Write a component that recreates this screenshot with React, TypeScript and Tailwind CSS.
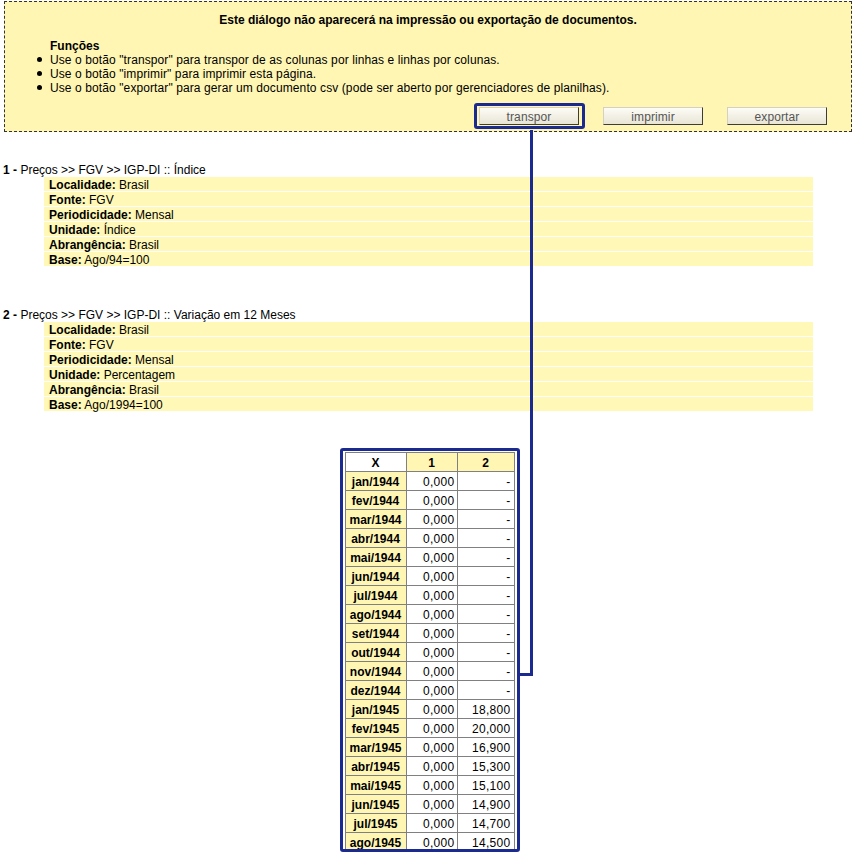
import React from "react";

const meses = ["jan", "fev", "mar", "abr", "mai", "jun", "jul", "ago", "set", "out", "nov", "dez"];
const valores1945 = ["18,800", "20,000", "16,900", "15,300", "15,100", "14,900", "14,700", "14,500"];

interface Linha {
  data: string;
  v1: string;
  v2: string;
}

function getLinhas(): Linha[] {
  const linhas: Linha[] = [];
  // 1944 sem dados na série 2
  meses.forEach((m) => linhas.push({ data: `${m}/1944`, v1: "0,000", v2: "-" }));
  valores1945.forEach((v, i) => linhas.push({ data: `${meses[i]}/1945`, v1: "0,000", v2: v }));
  return linhas;
}

interface SerieProps {
  n: number;
  titulo: string;
  unidade: string;
  base: string;
}

function Serie({ n, titulo, unidade, base }: SerieProps) {
  const campos: [string, string][] = [
    ["Localidade", "Brasil"],
    ["Fonte", "FGV"],
    ["Periodicidade", "Mensal"],
    ["Unidade", unidade],
    ["Abrangência", "Brasil"],
    ["Base", base],
  ];
  return (
    <div>
      <p className="h-[14px] leading-[16px] pl-[3px]">
        <b>{n} -</b> {titulo}
      </p>
      <div className="mt-[1px] ml-[44px] w-[769px] flex flex-col gap-[1px]">
        {campos.map(([k, v]) => (
          <div key={k} className="h-[14px] leading-[16px] bg-[#fff8b6] pl-[5px]">
            <b>{k}:</b> {v}
          </div>
        ))}
      </div>
    </div>
  );
}

function Botao({ children }: { children: React.ReactNode }) {
  return (
    <button className="h-[18px] w-[100px] border border-t-[#d4d0c4] border-l-[#d4d0c4] border-r-[#3c3c3c] border-b-[#3c3c3c] bg-gradient-to-b from-[#fdfcf6] to-[#e8e4d6] text-[#555] leading-[18px] tracking-[0.1px]">
      {children}
    </button>
  );
}

export default function App() {
  const linhas = getLinhas();
  const cell = "h-[19px] pt-[1px] border-r border-b border-[#808080] flex items-center";

  return (
    <div className="relative min-h-screen bg-white text-black font-['Liberation_Sans',Arial,sans-serif] text-[12px] leading-[14px]">
      {/* Diálogo */}
      <div className="mt-[1px] ml-[4px] mr-[2px] border border-dashed border-[#333] bg-[#fff6b4] pt-[11px] pb-[6px]">
        <p className="text-center font-bold">
          Este diálogo não aparecerá na impressão ou exportação de documentos.
        </p>
        <p className="mt-[12px] pl-[45px] font-bold">Funções</p>
        <ul className="tracking-[0.1px]">
          {[
            'Use o botão "transpor" para transpor de as colunas por linhas e linhas por colunas.',
            'Use o botão "imprimir" para imprimir esta página.',
            'Use o botão "exportar" para gerar um documento csv (pode ser aberto por gerenciadores de planilhas).',
          ].map((t) => (
            <li key={t} className="flex items-center h-[14px]">
              <span className="ml-[32px] mr-[8px] mb-[2px] w-[5px] h-[5px] rounded-full bg-black" />
              {t}
            </li>
          ))}
        </ul>
        <div className="mt-[12px] flex justify-end gap-[24px] pr-[24px]">
          <div className="relative">
            <Botao>transpor</Botao>
            <div className="absolute -left-[5px] -right-[6px] -top-[4px] -bottom-[4px] border-[3px] border-[#1b2a8e] rounded-[3px]" />
          </div>
          <Botao>imprimir</Botao>
          <Botao>exportar</Botao>
        </div>
      </div>

      <div className="mt-[30px]">
        <Serie n={1} titulo="Preços >> FGV >> IGP-DI :: Índice" unidade="Índice" base="Ago/94=100" />
      </div>
      <div className="mt-[41px]">
        <Serie n={2} titulo="Preços >> FGV >> IGP-DI :: Variação em 12 Meses" unidade="Percentagem" base="Ago/1994=100" />
      </div>

      {/* Tabela */}
      <div className="mt-[41px] flex justify-center pl-[5px]">
        <div className="relative">
          <div className="grid grid-cols-[61px_51px_57px] border-l border-t border-[#808080]">
            <div className={`${cell} justify-center font-bold bg-white`}>X</div>
            <div className={`${cell} justify-center font-bold bg-[#fff6b4]`}>1</div>
            <div className={`${cell} justify-center font-bold bg-[#fff6b4]`}>2</div>
            {linhas.map((l) => (
              <React.Fragment key={l.data}>
                <div className={`${cell} justify-center font-bold bg-[#fff6b4]`}>{l.data}</div>
                <div className={`${cell} justify-end pr-[2px] tracking-[0.3px]`}>{l.v1}</div>
                <div className={`${cell} justify-end pr-[3px] tracking-[0.3px]`}>{l.v2}</div>
              </React.Fragment>
            ))}
          </div>
          <div className="absolute -left-[5px] -right-[5px] -top-[4px] bottom-0 border-[3px] border-[#1b2a8e] rounded-[3px]" />
        </div>
      </div>

      {/* Ligação entre o botão transpor e a tabela */}
      <div className="absolute left-[530px] top-[129px] w-[3px] h-[546px] bg-[#1b2a8e]" />
      <div className="absolute left-[518px] top-[672px] w-[15px] h-[3px] bg-[#1b2a8e]" />
    </div>
  );
}
